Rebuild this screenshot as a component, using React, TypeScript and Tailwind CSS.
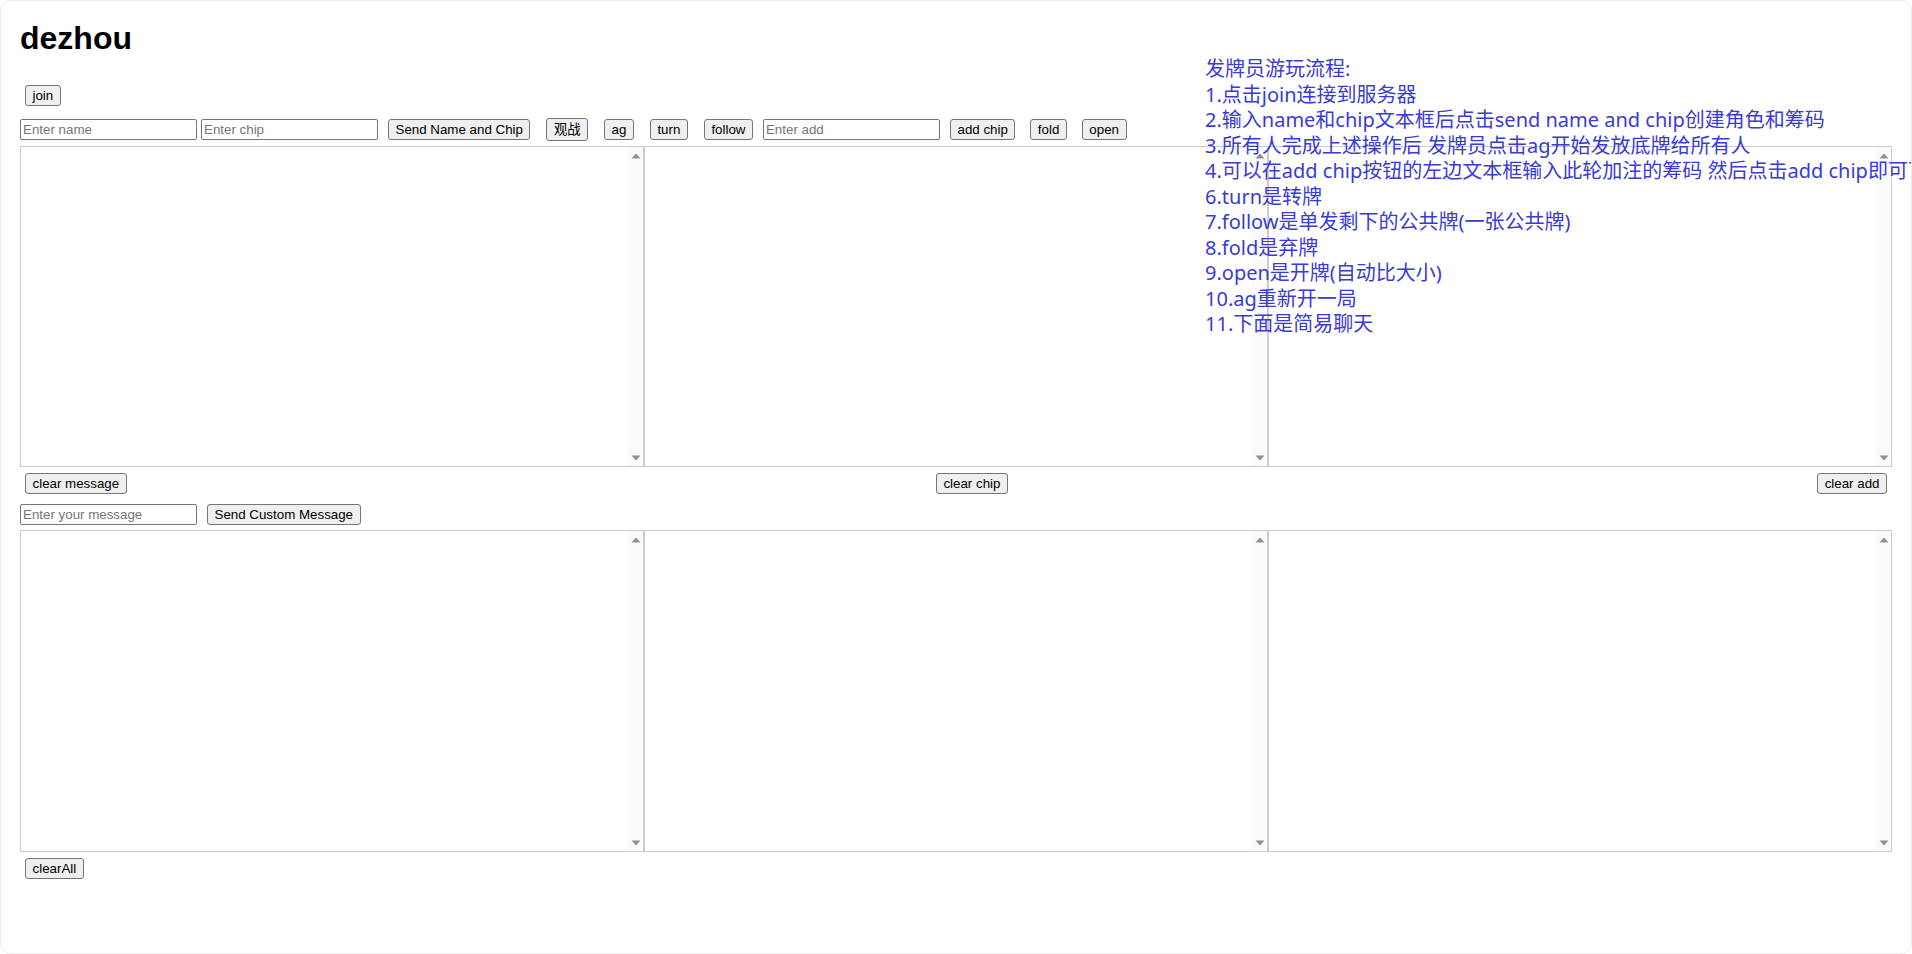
import React from "react";

const btn =
  "h-[21px] px-[6.5px] border border-[#767676] rounded-[3px] bg-[#efefef] text-black text-[13.333px] leading-[15px] font-['Liberation_Sans','Noto_Sans_CJK_SC',sans-serif] whitespace-nowrap shrink-0";
const inp =
  "h-[21px] w-[177px] px-[2px] border border-[#767676] rounded-[2px] bg-white text-[13.333px] font-['Liberation_Sans',sans-serif] placeholder:text-[#757575] outline-none shrink-0";

function Arrow({ down }: { down?: boolean }) {
  return (
    <svg width="10" height="6" viewBox="0 0 10 6">
      {down ? (
        <polygon points="0.5,0.5 9.5,0.5 5,5.5" fill="#8f8f8f" />
      ) : (
        <polygon points="5,0.5 9.5,5.5 0.5,5.5" fill="#8f8f8f" />
      )}
    </svg>
  );
}

function Box() {
  return (
    <div className="flex h-full border border-[#cccccc] bg-white">
      <textarea className="flex-1 h-full resize-none outline-none bg-transparent p-[2px] text-[13.333px] font-['Liberation_Mono',monospace]" />
      <div className="w-[15px] h-full bg-[#fafafa] flex flex-col justify-between">
        <div className="h-[17px] flex items-center justify-center">
          <Arrow />
        </div>
        <div className="h-[17px] flex items-center justify-center">
          <Arrow down />
        </div>
      </div>
    </div>
  );
}

const lines = [
  "发牌员游玩流程:",
  "1.点击join连接到服务器",
  "2.输入name和chip文本框后点击send name and chip创建角色和筹码",
  "3.所有人完成上述操作后 发牌员点击ag开始发放底牌给所有人",
  "4.可以在add chip按钮的左边文本框输入此轮加注的筹码 然后点击add chip即可下注",
  "6.turn是转牌",
  "7.follow是单发剩下的公共牌(一张公共牌)",
  "8.fold是弃牌",
  "9.open是开牌(自动比大小)",
  "10.ag重新开一局",
  "11.下面是简易聊天",
];

export default function App() {
  return (
    <div className="w-[1912px] h-[954px] overflow-hidden bg-white">
      <div className="relative h-full overflow-hidden rounded-[10px] border border-[#ebebeb] px-[19px] font-['Liberation_Sans',sans-serif]">
        <h1 className="mt-[19px] text-[32px] leading-[37px] font-bold text-black font-['Liberation_Sans',sans-serif]">
          dezhou
        </h1>

        <div className="mt-[28px] h-[21px] flex">
          <button className={`${btn} ml-[5px]`}>join</button>
        </div>

        <div className="mt-[12px] h-[23px] flex items-center">
          <input className={inp} placeholder="Enter name" />
          <input className={`${inp} ml-[4px]`} placeholder="Enter chip" />
          <button className={`${btn} ml-[10px]`}>Send Name and Chip</button>
          <button className={`${btn} ml-[16px] h-[23px]`}>观战</button>
          <button className={`${btn} ml-[16px]`}>ag</button>
          <button className={`${btn} ml-[16px]`}>turn</button>
          <button className={`${btn} ml-[16px]`}>follow</button>
          <input className={`${inp} ml-[10px]`} placeholder="Enter add" />
          <button className={`${btn} ml-[10px]`}>add chip</button>
          <button className={`${btn} ml-[15px]`}>fold</button>
          <button className={`${btn} ml-[15px]`}>open</button>
        </div>

        <div className="mt-[5px] h-[321px] grid grid-cols-3">
          <Box />
          <Box />
          <Box />
        </div>

        <div className="mt-[6px] h-[21px] flex justify-between">
          <button className={`${btn} mx-[5px]`}>clear message</button>
          <button className={`${btn} mx-[5px]`}>clear chip</button>
          <button className={`${btn} mx-[5px]`}>clear add</button>
        </div>

        <div className="mt-[10px] h-[21px] flex items-center">
          <input className={inp} placeholder="Enter your message" />
          <button className={`${btn} ml-[10px]`}>Send Custom Message</button>
        </div>

        <div className="mt-[5px] h-[322px] grid grid-cols-3">
          <Box />
          <Box />
          <Box />
        </div>

        <div className="mt-[6px] h-[21px] flex">
          <button className={`${btn} ml-[5px]`}>clearAll</button>
        </div>

        <div className="absolute left-[1204px] top-[55px] text-[20px] leading-[25.5px] text-[#3a3ad6] whitespace-nowrap font-['Noto_Sans','Noto_Sans_CJK_SC',sans-serif]">
          {lines.map((l) => (
            <div key={l}>{l}</div>
          ))}
        </div>
      </div>
    </div>
  );
}
